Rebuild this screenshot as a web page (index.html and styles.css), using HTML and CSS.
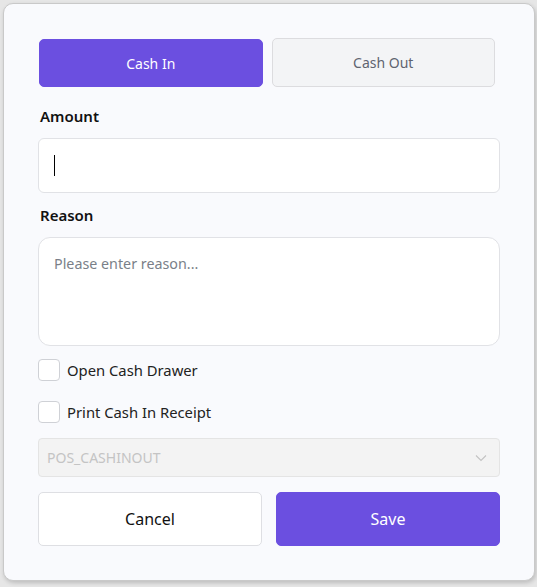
FILE: index.html
```html
<!DOCTYPE html>
<html>
<head>
<meta charset="utf-8">
<link rel="stylesheet" href="styles.css">
</head>
<body>
<div class="card">
  <div class="tabs">
    <button class="tab tab-active">Cash In</button>
    <button class="tab tab-idle">Cash Out</button>
  </div>
  <div class="label label-amount">Amount</div>
  <div class="input"><span class="caret"></span></div>
  <div class="label label-reason">Reason</div>
  <div class="textarea"><span class="placeholder">Please enter reason...</span></div>
  <label class="check check-first"><span class="box"></span><span>Open Cash Drawer</span></label>
  <label class="check check-second"><span class="box"></span><span>Print Cash In Receipt</span></label>
  <div class="select">
    <span>POS_CASHINOUT</span>
    <svg class="chev" width="12" height="8" viewBox="0 0 12 8"><path d="M1 1.5 L6 6.5 L11 1.5" fill="none" stroke="#c4c4c4" stroke-width="1.2"/></svg>
  </div>
  <div class="actions">
    <button class="btn btn-cancel">Cancel</button>
    <button class="btn btn-save">Save</button>
  </div>
</div>
</body>
</html>
```
FILE: styles.css
```css
html, body {
  margin: 0;
  padding: 0;
  background: #e6e6e6;
  font-family: "Noto Sans", "Open Sans", sans-serif;
}
body {
  padding: 3px 0 0 3px;
  width: 537px;
  height: 587px;
  box-sizing: border-box;
}
.card {
  width: 532px;
  height: 578px;
  box-sizing: border-box;
  background: #f9fafd;
  border: 1px solid #c9c9c9;
  border-radius: 10px;
  box-shadow: 1px 2px 4px rgba(0,0,0,0.18);
  padding: 34px 34px 0 34px;
  display: flex;
  flex-direction: column;
}
.tabs {
  display: flex;
  gap: 9px;
  height: 49px;
  padding-right: 5px;
}
.tab {
  flex: 1;
  font-family: inherit;
  font-size: 14px;
  border-radius: 5px;
  cursor: pointer;
}
.tab-active {
  background: #6b4fe0;
  color: #fff;
  border: 1px solid #6b4fe0;
  margin-top: 1px;
  margin-left: 1px;
}
.tab-idle {
  background: #f3f4f6;
  color: #5f6470;
  border: 1px solid #dcdcdf;
}
.label {
  font-size: 15px;
  font-weight: 600;
  color: #111;
  height: 20px;
  line-height: 20px;
  padding-left: 2px;
}
.label-amount { margin-top: 19px; margin-bottom: 12px; }
.label-reason { margin-top: 12px; margin-bottom: 12px; }
.input {
  height: 55px;
  box-sizing: border-box;
  background: #fff;
  border: 1px solid #e1e2e6;
  border-radius: 6px;
  display: flex;
  align-items: center;
  padding-left: 15px;
}
.caret {
  width: 1px;
  height: 21px;
  background: #000;
}
.textarea {
  height: 109px;
  box-sizing: border-box;
  background: #fff;
  border: 1px solid #e1e2e6;
  border-radius: 12px;
  padding: 14px 15px;
}
.placeholder {
  font-size: 14.3px;
  color: #7a7f88;
  line-height: 22px;
}
.check {
  display: flex;
  align-items: center;
  gap: 7px;
  font-size: 14.8px;
  color: #222;
  height: 22px;
}
.check-first { margin-top: 13px; }
.check-second { margin-top: 20px; }
.box {
  width: 20px;
  height: 20px;
  background: #fff;
  border: 1px solid #cfd1d6;
  border-radius: 4px;
}
.select {
  margin-top: 15px;
  height: 39px;
  box-sizing: border-box;
  background: #f3f3f3;
  border: 1px solid #e4e4e4;
  border-radius: 4px;
  display: flex;
  align-items: center;
  justify-content: space-between;
  padding: 0 12px 0 8px;
  font-size: 14px;
  color: #c4c4c4;
}
.actions {
  margin-top: 15px;
  display: flex;
  gap: 14px;
  height: 54px;
}
.btn {
  flex: 1;
  font-family: inherit;
  font-size: 16px;
  border-radius: 5px;
  cursor: pointer;
}
.btn-cancel {
  background: #fff;
  color: #111;
  border: 1px solid #dedfe3;
}
.btn-save {
  background: #6b4fe0;
  color: #fff;
  border: 1px solid #6b4fe0;
}
```
